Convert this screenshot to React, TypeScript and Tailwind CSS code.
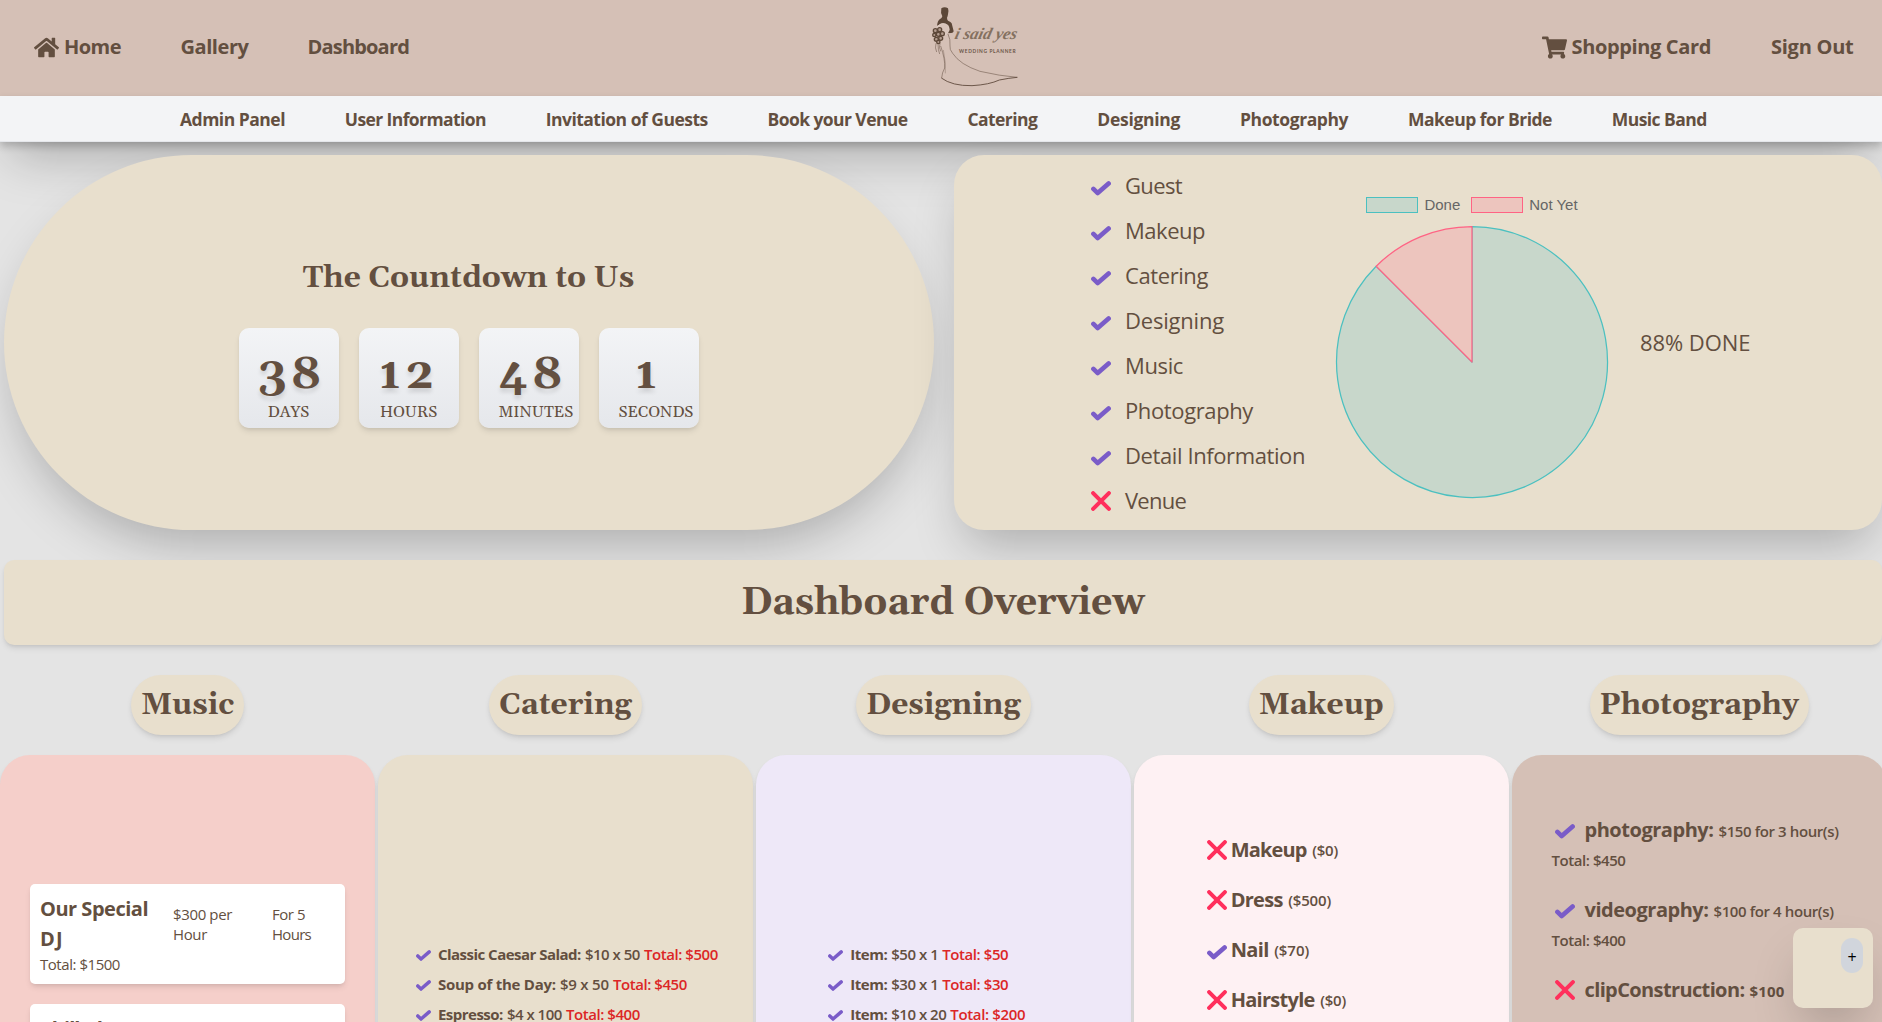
import React, { useLayoutEffect, useRef, useState } from "react";
import { FaHome, FaShoppingCart } from "react-icons/fa";

/* Single-line text whose letter spacing is adjusted so that it fills `w` pixels. */
function Fit({ w, children, className = "" }: { w: number; children: string; className?: string }) {
  const ref = useRef<HTMLSpanElement>(null);
  const [spacing, setSpacing] = useState(0);
  useLayoutEffect(() => {
    if (ref.current) {
      const natural = ref.current.getBoundingClientRect().width;
      setSpacing((w - natural) / children.length);
    }
  }, []);
  return (
    <span ref={ref} className={`inline-block whitespace-pre ${className}`} style={{ letterSpacing: spacing }}>
      {children}
    </span>
  );
}

function Check({ className = "w-5" }: { className?: string }) {
  return (
    <svg viewBox="0 0 20 15" className={`shrink-0 ${className}`} fill="none" stroke="#7a5cc8" strokeWidth="4.6" strokeLinecap="round" strokeLinejoin="round">
      <path d="M2.4 7.9 L6.7 12.1 L17.6 2.5" />
    </svg>
  );
}

function Cross() {
  return (
    <svg viewBox="0 0 20 20" className="w-5 shrink-0" fill="none" stroke="#ff2f5c" strokeWidth="4" strokeLinecap="round">
      <path d="M2.1 2.1 L17.9 17.9 M17.9 2.1 L2.1 17.9" />
    </svg>
  );
}

function Logo() {
  return (
    <svg viewBox="0 0 330 288" className="h-24 w-[110px]" fill="none" stroke="#644f42">
      <path d="M64 25 q10 -6 20 0 q3 9 0 18 q-1 7 -3 10 q0 6 3 9 q9 3 11 8 l6 24 q-1 5 -7 5 l-18 1 l-1 -5 l13 -4 l-7 -14 q-8 -9 -17 -6 l-13 6 q2 -15 8 -19 q7 -3 8 -9 q-6 -10 -3 -24 z" fill="#5c4738" stroke="none" />
      <path d="M52 80 q10 -13 24 -9 q12 3 12 18 q-2 10 -10 14 l-14 2 z" fill="#d9c5bb" strokeWidth="1.5" stroke="#eadcd4" />
      <g fill="#b39c8f" stroke="#5c4738" strokeWidth="4">
        <circle cx="46" cy="92" r="6" />
        <circle cx="59" cy="89" r="6" />
        <circle cx="67" cy="101" r="6" />
        <circle cx="43" cy="105" r="5" />
        <circle cx="55" cy="103" r="6" />
        <circle cx="49" cy="118" r="6" />
        <circle cx="62" cy="115" r="6" />
        <circle cx="55" cy="126" r="5" />
      </g>
      <path d="M48 130 q-4 14 2 26 M54 132 q0 18 5 30 M60 130 q-4 12 2 24" strokeWidth="1.6" />
      <path d="M62 138 q14 40 12 66 q-8 14 -9 30" strokeWidth="1.6" />
      <path d="M70 150 q8 36 6 70" strokeWidth="1" />
      <path d="M84 102 q8 16 6 36 q-2 10 8 22 q22 34 82 54 q60 14 112 18" strokeWidth="1.6" />
      <path d="M64 234 q32 24 92 23 q52 -3 82 -17 q30 -6 54 -8" strokeWidth="2.8" />
      <text x="84" y="76" transform="translate(0 116) skewX(-14) scale(1 1.2) translate(18 -76)" textLength="186" lengthAdjust="spacingAndGlyphs" fontFamily="Liberation Serif, serif" fontStyle="italic" fontSize="41" fill="#84705f" stroke="none">i said yes</text>
      <text x="117" y="158" textLength="170" fontFamily="Lato, sans-serif" fontWeight="700" fontSize="14.5" fill="#6b5547" stroke="none">WEDDING PLANNER</text>
    </svg>
  );
}

const subNav: [string, number][] = [
  ["Admin Panel", 105],
  ["User Information", 141],
  ["Invitation of Guests", 162],
  ["Book your Venue", 140],
  ["Catering", 70],
  ["Designing", 83],
  ["Photography", 108],
  ["Makeup for Bride", 144],
  ["Music Band", 95],
];

const tasks: [string, number, boolean][] = [
  ["Guest", 57, true],
  ["Makeup", 80, true],
  ["Catering", 83, true],
  ["Designing", 99, true],
  ["Music", 58, true],
  ["Photography", 128, true],
  ["Detail Information", 180, true],
  ["Venue", 61, false],
];

const countdown: [string, string][] = [
  ["38", "DAYS"],
  ["12", "HOURS"],
  ["48", "MINUTES"],
  ["1", "SECONDS"],
];

type Line = [string, number, string, number, string, number];

const catering: Line[] = [
  ["Classic Caesar Salad:", 143, "$10 x 50", 55, "Total: $500", 74],
  ["Soup of the Day:", 118, "$9 x 50", 49, "Total: $450", 74],
  ["Espresso:", 65, "$4 x 100", 55, "Total: $400", 74],
];

const designing: Line[] = [
  ["Item:", 37, "$50 x 1", 47, "Total: $50", 66],
  ["Item:", 37, "$30 x 1", 47, "Total: $30", 66],
  ["Item:", 37, "$10 x 20", 55, "Total: $200", 75],
];

const makeup: [string, number, string, number, boolean][] = [
  ["Makeup", 76, "($0)", 26, false],
  ["Dress", 52, "($500)", 43, false],
  ["Nail", 38, "($70)", 35, true],
  ["Hairstyle", 84, "($0)", 26, false],
];

function Lines({ rows }: { rows: Line[] }) {
  return (
    <div className="flex flex-col">
      {rows.map(([name, a, qty, b, total, c]) => (
        <div key={name + qty} className="flex h-[30px] items-center text-[15px] leading-[30px]">
          <Check className="mt-1 w-[15px]" />
          <Fit w={a} className="ml-[7px] font-bold">{name}</Fit>
          <Fit w={b} className="ml-1 font-semibold">{qty}</Fit>
          <Fit w={c} className="ml-1 font-semibold text-[#dc2626]">{total}</Fit>
        </div>
      ))}
    </div>
  );
}

function Column({ title, color, children }: { title: string; color: string; children: React.ReactNode }) {
  return (
    <section className="flex flex-col items-center">
      <h2 className="flex h-[60px] items-center rounded-full bg-[#e8dfcd] px-2.5 font-[Gelasio,serif] text-[30px] font-bold shadow-md">{title}</h2>
      <div className={`mt-5 h-[600px] w-full rounded-[30px] shadow-md ${color}`}>{children}</div>
    </section>
  );
}

function Shoot({ name, w, price, total }: { name: string; w: number; price: string; total: string }) {
  return (
    <div className="h-20 pl-10">
      <div className="flex h-[30px] items-center pl-[3px]">
        <Check className="mt-0.5 w-5" />
        <Fit w={w} className="ml-2.5 text-xl leading-[30px] font-bold">{name}</Fit>
        <Fit w={120} className="ml-[5px] pt-0.5 text-[15px] font-semibold">{price}</Fit>
      </div>
      <Fit w={74} className="text-[15px] leading-[30px] font-semibold">{total}</Fit>
    </div>
  );
}

export default function App() {
  return (
    <div className="relative h-[1022px] w-full overflow-hidden bg-[#e4e4e4] font-['Open_Sans',sans-serif] text-[#634f40]">
      <header className="shadow-2xl">
        <div className="grid h-24 grid-cols-[920px_110px_1fr] bg-[#d5c0b6] text-xl font-bold">
          <nav className="flex items-center pb-0.5 pl-[34px]">
            <FaHome className="size-[25px]" />
            <Fit w={57} className="ml-[5px]">Home</Fit>
            <Fit w={68} className="ml-[59.5px]">Gallery</Fit>
            <Fit w={101.5} className="ml-[59px]">Dashboard</Fit>
          </nav>
          <Logo />
          <nav className="flex items-center justify-end pr-[28.5px] pb-0.5">
            <FaShoppingCart className="size-[25px]" />
            <Fit w={139.5} className="ml-[4.5px]">Shopping Card</Fit>
            <Fit w={82.5} className="ml-[60px]">Sign Out</Fit>
          </nav>
        </div>
        <nav className="flex h-[46px] items-center gap-[59.85px] border-b border-gray-200 bg-gray-100 pt-0.5 pl-[180px] text-[17.5px] font-bold shadow-[0_4px_8px_rgba(0,0,0,0.2)]">
          {subNav.map(([t, w]) => (
            <Fit key={t} w={w}>{t}</Fit>
          ))}
        </nav>
      </header>

      <main>
        <div className="mt-[13px] flex h-[375px] gap-5 pl-1">
          <section className="w-[930px] rounded-full bg-[#e8dfcd] pt-[103px] font-[Gelasio,serif] shadow-2xl">
            <h2 className="pr-px text-center text-[30px] leading-10 font-bold">The Countdown to Us</h2>
            <div className="mt-[30px] flex justify-center gap-5 pr-px">
              {countdown.map(([n, label]) => (
                <div key={label} className="flex size-[100px] flex-col rounded-[10px] bg-linear-to-b from-gray-100 to-gray-200 px-5 pt-5 shadow-md">
                  <div className="text-center text-[45px] leading-[54px] font-bold tracking-[4.5px] [text-shadow:0_4px_4px_rgba(0,0,0,0.12)]">{n}</div>
                  <div className="-mt-px text-center text-base leading-[22px]">{label}</div>
                </div>
              ))}
            </div>
          </section>

          <section className="flex w-[928px] rounded-[30px] bg-[#e8dfcd] pl-[137px] shadow-2xl">
            <ul className="w-[234px] pt-2">
              {tasks.map(([t, w, done]) => (
                <li key={t} className="flex h-[45px] items-center text-[22px] font-normal">
                  {done ? <Check className="mt-1.5 w-5" /> : <Cross />}
                  <Fit w={w} className="ml-[14px]">{t}</Fit>
                </li>
              ))}
            </ul>
            <div className="mt-[41px] flex w-[294px] flex-col items-center">
              <div className="flex h-[18px] items-center gap-[11px] font-['Liberation_Sans',sans-serif] text-[15px] text-[#666]">
                <span className="flex items-center gap-[6px]">
                  <span className="h-4 w-[52px] border-[1.5px] border-[#4bc0c0] bg-[#c8d7cb]" />
                  Done
                </span>
                <span className="flex items-center gap-[6px]">
                  <span className="h-4 w-[52px] border-[1.5px] border-[#ff6384] bg-[#edc5be]" />
                  Not Yet
                </span>
              </div>
              <svg viewBox="0 0 276 276" className="mt-2.5 size-[276px]" strokeWidth="1.25" strokeLinejoin="round">
                <path d="M138 138 V2.5 A135.5 135.5 0 1 1 42.2 42.2 Z" fill="#c8d7cb" stroke="#4bc0c0" />
                <path d="M138 138 L42.2 42.2 A135.5 135.5 0 0 1 138 2.5 Z" fill="#edc5be" stroke="#ff6384" />
              </svg>
            </div>
            <Fit w={110.5} className="mt-[172px] ml-[21px] text-[22px] leading-[30px]">88% DONE</Fit>
          </section>
        </div>

        <h1 className="relative mt-[30px] ml-1 flex h-[85px] items-center justify-center rounded-[10px] bg-[#e8dfcd] pt-0.5 font-[Gelasio,serif] text-[37.5px] font-bold shadow-md">Dashboard Overview</h1>

        <div className="mt-[30px] grid w-[1887px] grid-cols-5 gap-[2.4px]">
          <Column title="Music" color="bg-[#f5cfca]">
            <div className="flex flex-col gap-5 px-[30px] pt-[129px]">
              <div className="flex h-[100px] flex-col items-start rounded-[5px] bg-white px-2.5 pt-2.5 shadow-md">
                <div className="flex h-[60px]">
                  <div className="flex w-[133px] flex-col items-start text-xl leading-[30px] font-bold">
                    <Fit w={108}>Our Special</Fit>
                    <Fit w={24}>DJ</Fit>
                  </div>
                  <div className="flex w-[99px] flex-col items-start pt-[9.5px] text-[15px] leading-5">
                    <Fit w={59}>$300 per</Fit>
                    <Fit w={34}>Hour</Fit>
                  </div>
                  <div className="flex flex-col items-start pt-[9.5px] text-[15px] leading-5">
                    <Fit w={33}>For 5</Fit>
                    <Fit w={39}>Hours</Fit>
                  </div>
                </div>
                <Fit w={80} className="text-[15px] leading-5">Total: $1500</Fit>
              </div>
              <div className="flex h-[100px] items-start rounded-[5px] bg-white px-2.5 pt-2.5 text-xl leading-[30px] font-bold shadow-md">
                <Fit w={62}>Chilled</Fit>
              </div>
            </div>
          </Column>
          <Column title="Catering" color="bg-[#e8dfcd]">
            <div className="pt-[184px] pl-[38px]">
              <Lines rows={catering} />
            </div>
          </Column>
          <Column title="Designing" color="bg-[#eee8f8]">
            <div className="pt-[184px] pl-[72.5px]">
              <Lines rows={designing} />
            </div>
          </Column>
          <Column title="Makeup" color="bg-[#fef1f3]">
            <div className="pt-[69.5px] pl-[73px]">
              {makeup.map(([t, a, p, b, done]) => (
                <div key={t} className="flex h-[50px] items-center">
                  {done ? <Check className="mt-1.5 w-5" /> : <Cross />}
                  <Fit w={a} className="ml-1 text-xl font-bold">{t}</Fit>
                  <Fit w={b} className="ml-[5.5px] pt-0.5 text-[15px] font-semibold">{p}</Fit>
                </div>
              ))}
            </div>
          </Column>
          <Column title="Photography" color="bg-[#d5c0b6]">
            <div className="pt-[60px]">
              <Shoot name="photography:" w={129} price="$150 for 3 hour(s)" total="Total: $450" />
              <Shoot name="videography:" w={124} price="$100 for 4 hour(s)" total="Total: $400" />
              <div className="flex h-[30px] items-center pl-[43px]">
                <Cross />
                <Fit w={160} className="ml-2.5 text-xl font-bold">clipConstruction:</Fit>
                <Fit w={35} className="ml-[5px] pt-0.5 text-[15px] font-bold">$100</Fit>
              </div>
            </div>
          </Column>
        </div>
      </main>

      <aside className="absolute top-[928px] left-[1793px] flex size-20 justify-end rounded-[10px] bg-[#e8dfcd] p-2.5 shadow-2xl">
        <button className="flex h-[35px] w-[22px] items-center justify-center rounded-full bg-gray-300 pt-0.5 text-base text-black">+</button>
      </aside>
    </div>
  );
}
